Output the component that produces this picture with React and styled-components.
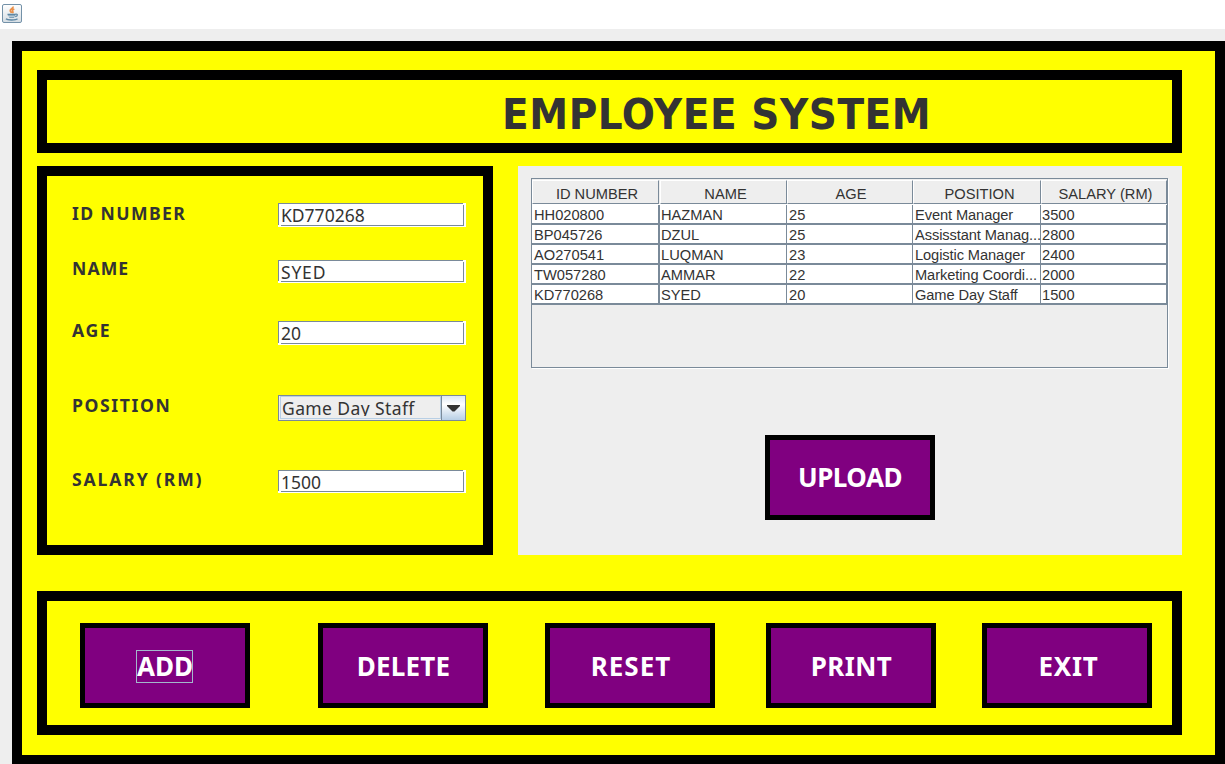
import React from 'react';
import styled, { createGlobalStyle } from 'styled-components';

const LINE = '#7a8a99';
const INK = '#333333';
const UI_FONT = '"Noto Sans", "DejaVu Sans", sans-serif';

const GlobalStyle = createGlobalStyle`
  * { box-sizing: border-box; }
  html, body { margin: 0; padding: 0; }
  body {
    width: 1225px;
    height: 764px;
    overflow: hidden;
    background: #eeeeee;
    color: ${INK};
  }
`;

const Window = styled.div`
  display: flex;
  flex-direction: column;
  height: 764px;
  overflow: hidden;
`;

const TitleBar = styled.div`
  flex: none;
  height: 29px;
  padding: 4px 0 0 2px;
  background: #ffffff;
  svg { display: block; }
`;

const Frame = styled.main`
  flex: none;
  width: 1213px;
  height: 724px;
  margin: 12px 0 0 12px;
  padding: 19px 33px 20px 15px;
  border: 10px solid #000;
  background: #ffff00;
  display: flex;
  flex-direction: column;
`;

const Header = styled.header`
  flex: none;
  height: 83px;
  border: 10px solid #000;
  padding: 1px 0 0 455px;
`;

const Title = styled.h1`
  margin: 0;
  font: bold 43.4px/66px "DejaVu Sans Condensed", "DejaVu Sans", sans-serif;
  letter-spacing: 0.55px;
  white-space: nowrap;
`;

const Middle = styled.div`
  flex: none;
  display: flex;
  gap: 25px;
  height: 389px;
  margin-top: 13px;
`;

const Form = styled.form`
  flex: none;
  width: 456px;
  border: 10px solid #000;
  padding: 27px 0 0 25px;
`;

const FormRow = styled.div`
  display: grid;
  grid-template-columns: 206px 188px;
  align-items: start;
  height: ${(p) => p.$pitch}px;
`;

const Label = styled.label`
  height: 18px;
  margin-top: ${(p) => p.$shift}px;
  overflow: ${(p) => (p.$clip ? 'hidden' : 'visible')};
  font: bold 17.6px/18px ${UI_FONT};
  letter-spacing: ${(p) => p.$spacing}px;
  white-space: nowrap;
`;

const Input = styled.input`
  width: 188px;
  height: ${(p) => p.$height}px;
  padding: ${(p) => (p.$height === 24 ? '0 3px 1px' : '1px 3px 0')};
  border: 0;
  border-radius: 0;
  outline: 0;
  color: ${INK};
  font: 17.5px/22px ${UI_FONT};
  letter-spacing: ${(p) => p.$spacing}px;
  background:
    linear-gradient(${LINE}, ${LINE}) 0 0 / 185px 1px no-repeat,
    linear-gradient(${LINE}, ${LINE}) 0 0 / 1px calc(100% - 2px) no-repeat,
    linear-gradient(${LINE}, ${LINE}) 185px 2px / 1px calc(100% - 3px) no-repeat,
    linear-gradient(${LINE}, ${LINE}) 3px calc(100% - 1px) / 183px 1px no-repeat,
    #ffffff;
`;

const Combo = styled.div`
  display: flex;
  width: 188px;
  height: 26px;
  border: 1px solid ${LINE};
  background: #eeeeee;
`;

const ComboValue = styled.div`
  width: 161px;
  height: 23px;
  margin: 0 0 0 1px;
  border: 1px solid #b8cfe5;
  padding-left: 1px;
`;

const ComboText = styled.span`
  display: block;
  height: 19px;
  overflow: hidden;
  font: 17.5px/22px ${UI_FONT};
  letter-spacing: 0.4px;
  white-space: nowrap;
`;

const ComboButton = styled.div`
  display: flex;
  justify-content: center;
  flex: 1;
  padding-top: 9px;
  border-left: 1px solid ${LINE};
  background: linear-gradient(#dde8f3, #ffffff 35%, #b8cfe5);
`;

const TablePanel = styled.section`
  flex: none;
  width: 664px;
  padding: 12px 0 0 13px;
  background: #eeeeee;
`;

const TableBox = styled.div`
  width: 637px;
  height: 190px;
  border: 1px solid ${LINE};
  box-shadow: 1px 1px 0 #ffffff;
`;

const Row = styled.div`
  display: grid;
  grid-template-columns: 128px 127px 126px 128px 126px;
  height: 20px;
  background: #ffffff;
  border-bottom: 2px solid ${LINE};
`;

const HeadRow = styled(Row)`
  height: 26px;
  padding-top: 1px;
  background: #eeeeee;
  border-bottom: 1px solid #ffffff;
`;

const Cell = styled.div`
  height: 18px;
  padding-left: ${(p) => (p.$inset ? 2 : 1)}px;
  border-right: ${(p) => (p.$wide ? 2 : 1)}px solid ${LINE};
  font: 14.67px/20px "Liberation Sans", Arial, sans-serif;
  letter-spacing: ${(p) => (p.$tight ? -0.1 : 0)}px;
  white-space: nowrap;
`;

const HeadCell = styled.div`
  height: 24px;
  margin-right: ${(p) => (p.$wide ? 1 : 0)}px;
  padding-left: ${(p) => p.$indent}px;
  border: 1px solid ${LINE};
  border-top-color: #ffffff;
  border-left-color: #ffffff;
  font: 14.67px/26px "Liberation Sans", Arial, sans-serif;
  text-align: center;
  white-space: nowrap;
`;

const Button = styled.button`
  position: relative;
  flex: none;
  width: 170px;
  height: 85px;
  margin: 0;
  padding: 0 0 ${(p) => p.$raise || 0}px ${(p) => p.$indent || 0}px;
  border: 5px solid #000;
  border-radius: 0;
  background: #800080;
  color: #ffffff;
  font: bold 26px/36px ${UI_FONT};
  letter-spacing: ${(p) => p.$spacing || 0}px;
`;

const FocusRing = styled.span`
  position: absolute;
  left: 51px;
  top: 22px;
  width: 57px;
  height: 33px;
  border: 1px solid #a3b8cc;
`;

const UploadArea = styled.div`
  padding: 67px 0 0 234px;
`;

const Actions = styled.footer`
  flex: none;
  display: grid;
  grid-template-columns: 238px 227px 221px 216px 170px;
  height: 144px;
  margin-top: 36px;
  padding: 22px 0 0 33px;
  border: 10px solid #000;
`;

const JavaIcon = () => (
  <svg width="20" height="19" viewBox="0 0 20 19">
    <defs>
      <linearGradient id="cup" x1="0" y1="0" x2="0" y2="1">
        <stop offset="0" stopColor="#ffffff" />
        <stop offset="1" stopColor="#d5dde3" />
      </linearGradient>
    </defs>
    <rect x="0.5" y="0.5" width="19" height="18" rx="1.5" fill="url(#cup)" stroke="#7391a8" />
    <path d="M11 2.500c.8 2-3.300 2.400-2.800 4.300.2.900 1.200 1.500 1.500 2.200M12.300 5c-2 .8-2.400 1.500-1.500 2.500.5.700.2 1.200-.4 1.700" fill="none" stroke="#e9914c" strokeWidth="1.700" />
    <path d="M6 10.500h7.500l-1.500 3.500h-4.500z" fill="#7fa0b8" />
    <path d="M5.500 10.500h8M13.500 10.200c2.500-.5 2.500 1.800-.3 2.500M4 14.800c1.500 1.700 10 1.500 11.500 0" fill="none" stroke="#5d87a5" strokeWidth="1.300" />
    <path d="M7 12.200h5.500" stroke="#dfe8ee" strokeWidth="0.800" />
  </svg>
);

const COLUMNS = [
  { title: 'ID NUMBER', indent: 3 },
  { title: 'NAME', indent: 4 },
  { title: 'AGE', indent: 2 },
  { title: 'POSITION', indent: 5 },
  { title: 'SALARY (RM)', indent: 3 },
];
const ROWS = [
  ['HH020800', 'HAZMAN', '25', 'Event Manager', '3500'],
  ['BP045726', 'DZUL', '25', 'Assisstant Manag...', '2800'],
  ['AO270541', 'LUQMAN', '23', 'Logistic Manager', '2400'],
  ['TW057280', 'AMMAR', '22', 'Marketing Coordi...', '2000'],
  ['KD770268', 'SYED', '20', 'Game Day Staff', '1500'],
];

function TextRow({ label, value, pitch, shift, height, labelSpacing, spacing = 0, clip }) {
  return (
    <FormRow $pitch={pitch}>
      <Label $shift={shift} $spacing={labelSpacing} $clip={clip}>{label}</Label>
      <Input type="text" defaultValue={value} $height={height} $spacing={spacing} />
    </FormRow>
  );
}

export default function App() {
  return (
    <>
      <GlobalStyle />
      <Window>
        <TitleBar><JavaIcon /></TitleBar>
        <Frame>
          <Header><Title>EMPLOYEE SYSTEM</Title></Header>
          <Middle>
            <Form>
              <TextRow label="ID NUMBER" value="KD770268" pitch={57} shift={1} height={24} labelSpacing={1.4} />
              <TextRow label="NAME" value="SYED" pitch={61} shift={-1} height={23} labelSpacing={1.1} spacing={0.8} />
              <TextRow label="AGE" value="20" pitch={74} shift={0} height={24} labelSpacing={1.6} />
              <FormRow $pitch={75}>
                <Label $shift={1} $spacing={1.6}>POSITION</Label>
                <Combo>
                  <ComboValue><ComboText>Game Day Staff</ComboText></ComboValue>
                  <ComboButton>
                    <svg width="13" height="7" viewBox="0 0 13 7"><path d="M0 0h13v1L7.500 6.500h-2L0 1z" fill={INK} /></svg>
                  </ComboButton>
                </Combo>
              </FormRow>
              <TextRow label="SALARY (RM)" value="1500" pitch={24} shift={0} height={23} labelSpacing={1.85} clip />
            </Form>
            <TablePanel>
              <TableBox>
                <HeadRow>
                  {COLUMNS.map((c, i) => (
                    <HeadCell key={c.title} $wide={i === 0} $indent={c.indent}>{c.title}</HeadCell>
                  ))}
                </HeadRow>
                {ROWS.map((r) => (
                  <Row key={r[0]}>
                    {r.map((v, i) => (
                      <Cell key={i} $inset={i === 0 || i === 2 || i === 3} $wide={i === 0} $tight={i === 3}>{v}</Cell>
                    ))}
                  </Row>
                ))}
              </TableBox>
              <UploadArea><Button $spacing={-0.5} $raise={2}>UPLOAD</Button></UploadArea>
            </TablePanel>
          </Middle>
          <Actions>
            <Button>ADD<FocusRing /></Button>
            <Button $spacing={0.2} $indent={1}>DELETE</Button>
            <Button $spacing={1} $indent={2}>RESET</Button>
            <Button $spacing={0.4} $indent={1}>PRINT</Button>
            <Button $spacing={0.7} $indent={3}>EXIT</Button>
          </Actions>
        </Frame>
      </Window>
    </>
  );
}
